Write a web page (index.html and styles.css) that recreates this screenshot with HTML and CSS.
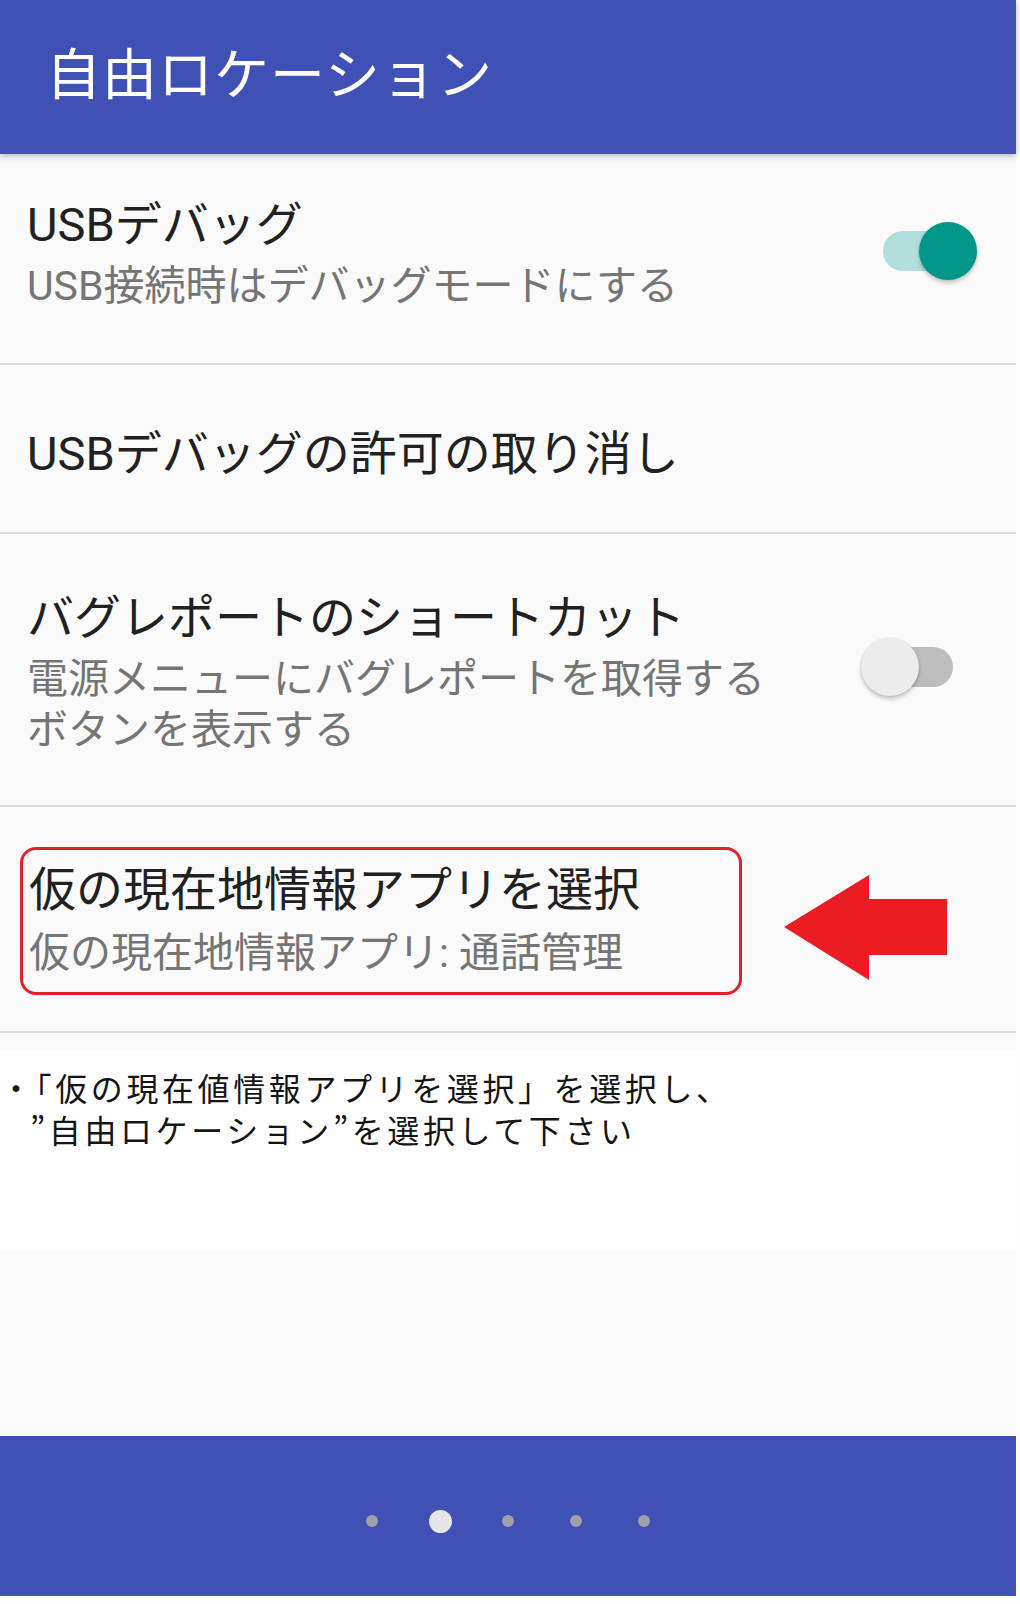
FILE: index.html
```html
<!DOCTYPE html>
<html lang="ja">
<head>
<meta charset="utf-8">
<title>自由ロケーション</title>
<link rel="stylesheet" href="styles.css">
</head>
<body>
<div class="app">
  <header class="appbar">
    <h1 class="appbar-title">自由ロケーション</h1>
  </header>

  <main class="prefs">
    <div class="pref pref-debug">
      <div class="pref-text">
        <div class="pref-title">USBデバッグ</div>
        <div class="pref-summary">USB接続時はデバッグモードにする</div>
      </div>
      <div class="switch switch-on">
        <span class="switch-track"></span>
        <span class="switch-thumb"></span>
      </div>
    </div>

    <div class="pref pref-revoke">
      <div class="pref-text">
        <div class="pref-title">USBデバッグの許可の取り消し</div>
      </div>
    </div>

    <div class="pref pref-bugreport">
      <div class="pref-text">
        <div class="pref-title">バグレポートのショートカット</div>
        <div class="pref-summary">電源メニューにバグレポートを取得する<br>ボタンを表示する</div>
      </div>
      <div class="switch switch-off">
        <span class="switch-track"></span>
        <span class="switch-thumb"></span>
      </div>
    </div>

    <div class="pref pref-mock">
      <div class="highlight">
        <div class="pref-title">仮の現在地情報アプリを選択</div>
        <div class="pref-summary">仮の現在地情報アプリ: 通話管理</div>
      </div>
      <svg class="arrow" width="163" height="105" viewBox="0 0 163 105" aria-hidden="true">
        <polygon points="0,52 85,0 85,24 163,24 163,80 85,80 85,105" fill="#ec1c24"/>
      </svg>
    </div>
  </main>

  <div class="note">
    <p class="note-line">・「仮の現在値情報アプリを選択」を選択し、</p>
    <p class="note-line note-indent">”自由ロケーション”を選択して下さい</p>
  </div>

  <footer class="pager">
    <span class="dot-cell"><span class="dot"></span></span>
    <span class="dot-cell"><span class="dot dot-active"></span></span>
    <span class="dot-cell"><span class="dot"></span></span>
    <span class="dot-cell"><span class="dot"></span></span>
    <span class="dot-cell"><span class="dot"></span></span>
  </footer>
</div>
</body>
</html>
```

FILE: styles.css
```css
* {
  box-sizing: border-box;
}

html, body {
  margin: 0;
  padding: 0;
}

body {
  background: #fdfdfd;
  font-family: Roboto, "Noto Sans CJK JP", sans-serif;
  width: 1020px;
  height: 1604px;
  overflow: hidden;
}

.app {
  width: 1016px;
  height: 1596px;
  background: #fafafa;
  display: flex;
  flex-direction: column;
}

/* App bar */
.appbar {
  height: 154px;
  background: #3f51b5;
  display: flex;
  align-items: center;
  padding: 0 0 4px 46px;
  position: relative;
  z-index: 1;
  box-shadow: 0 2px 6px rgba(0, 0, 0, 0.28);
  flex: none;
}

.appbar-title {
  margin: 0;
  color: #ffffff;
  font-size: 55px;
  font-weight: 400;
  line-height: 1;
  letter-spacing: 1px;
}

/* Preference rows */
.prefs {
  display: flex;
  flex-direction: column;
}

.pref {
  display: flex;
  align-items: flex-start;
  padding-left: 27px;
  border-bottom: 2px solid #dcdcdc;
}

.pref-text {
  flex: 1;
}

.pref-title {
  font-size: 47px;
  line-height: 60px;
  color: #212121;
  white-space: nowrap;
}

.pref-summary {
  font-size: 41px;
  line-height: 51px;
  color: #757575;
  margin-top: 6px;
  white-space: nowrap;
}

.pref-debug {
  padding-top: 41px;
  padding-bottom: 51px;
}

.pref-revoke {
  padding-top: 59px;
  padding-bottom: 48px;
}

.pref-bugreport {
  padding-top: 54px;
  padding-bottom: 49px;
}

.pref-mock {
  padding: 40px 0 36px 20px;
}

/* Switches */
.switch {
  position: relative;
  flex: none;
  height: 58px;
}

.switch-track {
  position: absolute;
  top: 9px;
  height: 40px;
  width: 77px;
  border-radius: 20px;
}

.switch-thumb {
  position: absolute;
  top: 0;
  width: 58px;
  height: 58px;
  border-radius: 50%;
  box-shadow: 0 3px 4px rgba(0, 0, 0, 0.22), 0 0 2px rgba(0, 0, 0, 0.12);
}

.switch-on {
  width: 94px;
  margin-top: 27px;
  margin-right: 39px;
}

.switch-on .switch-track {
  left: 0;
  background: #b2dfdb;
}

.switch-on .switch-thumb {
  right: 0;
  background: #009688;
}

.switch-off {
  width: 92px;
  margin-top: 50px;
  margin-right: 63px;
}

.switch-off .switch-track {
  right: 0;
  background: #bdbdbd;
}

.switch-off .switch-thumb {
  left: 0;
  background: #ececec;
}

/* Highlighted row */
.highlight {
  width: 722px;
  border: 3px solid #e3202a;
  border-radius: 16px;
  padding: 10px 0 13px 6px;
}

.highlight .pref-summary {
  margin-top: 8px;
}

.arrow {
  flex: none;
  margin-left: 42px;
  margin-top: 28px;
  display: block;
}

/* Instruction note */
.note {
  margin-top: 18px;
  height: 200px;
  background: #ffffff;
  padding-top: 15px;
  display: flex;
  flex-direction: column;
}

.note-line {
  margin: 0;
  font-family: "Noto Sans CJK JP", sans-serif;
  font-size: 32px;
  line-height: 42px;
  height: 42px;
  color: #151515;
  letter-spacing: 3.6px;
  white-space: nowrap;
}

.note-indent {
  padding-left: 30px;
}

/* Pager */
.pager {
  margin-top: 185px;
  height: 160px;
  background: #3f51b5;
  display: flex;
  justify-content: center;
  align-items: center;
  padding-top: 10px;
  flex: none;
}

.dot-cell {
  width: 68px;
  display: flex;
  justify-content: center;
  align-items: center;
}

.dot {
  width: 12px;
  height: 12px;
  border-radius: 50%;
  background: #a19fa8;
}

.dot-active {
  width: 23px;
  height: 23px;
  background: #e6e6e8;
}
```
